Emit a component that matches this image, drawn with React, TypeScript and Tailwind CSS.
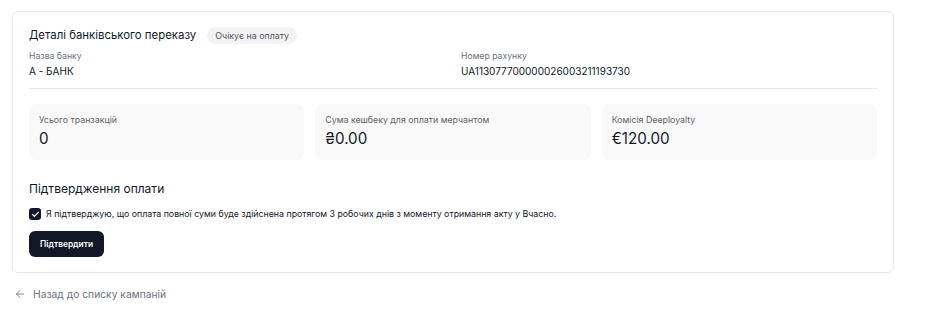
import { ArrowLeft, Check } from "lucide-react";

const Stat = ({ label, value }: { label: string; value: string }) => (
    <div className="rounded-lg bg-[#f9f9f9] px-[10px] pt-[10px] h-[56px]">
        <p className="text-[8.8px] leading-[12px] text-[#5f6368]">{label}</p>
        <p className="mt-[3px] text-[15.2px] leading-[20px] text-[#111827]">{value}</p>
    </div>
);

const App = () => {
    return (
        <div className="min-h-[317px] bg-white px-[12px] pt-[11px] font-['Inter',sans-serif] text-[#111827]">
            <div className="w-[882px] rounded-md border border-[#e6e7eb] px-[16px] pt-[13px] pb-[15px]">
                <div className="flex items-center gap-[11px]">
                    <h2 className="text-[11.4px] leading-[20px]">Деталі банківського переказу</h2>
                    <span className="rounded-full bg-[#f3f3f4] px-[8px] py-[3px] text-[8.9px] leading-[11px] text-[#4b5563]">
                        Очікує на оплату
                    </span>
                </div>

                <div className="mt-[5px] grid grid-cols-2 gap-4 border-b border-[#e5e7eb] pb-[10px]">
                    <div>
                        <p className="text-[8.7px] leading-[12px] text-[#6b7280]">Назва банку</p>
                        <p className="mt-[2px] text-[10px] leading-[14px]">А - БАНК</p>
                    </div>
                    <div>
                        <p className="text-[8.7px] leading-[12px] text-[#6b7280]">Номер рахунку</p>
                        <p className="mt-[2px] text-[10px] leading-[14px]">UA113077700000026003211193730</p>
                    </div>
                </div>

                <div className="mt-[15px] grid grid-cols-3 gap-[11px]">
                    <Stat label="Усього транзакцій" value="0" />
                    <Stat label="Сума кешбеку для оплати мерчантом" value="₴0.00" />
                    <Stat label="Комісія Deeployalty" value="€120.00" />
                </div>

                <h3 className="mt-[21px] text-[12px] leading-[16px]">Підтвердження оплати</h3>

                <label className="mt-[10px] flex items-center gap-[5px]">
                    <span className="flex h-[12px] w-[12px] items-center justify-center rounded-[3px] bg-[#111827]">
                        <Check className="h-[9px] w-[9px] text-white" strokeWidth={3} />
                    </span>
                    <span className="text-[8.8px] leading-[14px] text-[#111827]">
                        Я підтверджую, що оплата повної суми буде здійснена протягом 3 робочих днів з моменту отримання акту у Вчасно.
                    </span>
                </label>

                <button className="mt-[10px] h-[26px] rounded-md bg-[#111827] px-[11px] text-[8.4px] font-semibold text-white">
                    Підтвердити
                </button>
            </div>

            <div className="mt-[14px] flex items-center gap-[7px] pl-[2px] text-[#6b7280]">
                <ArrowLeft className="h-[12px] w-[12px]" strokeWidth={1.75} />
                <span className="text-[10.3px] leading-[14px]">Назад до списку кампаній</span>
            </div>
        </div>
    );
};

export default App;
